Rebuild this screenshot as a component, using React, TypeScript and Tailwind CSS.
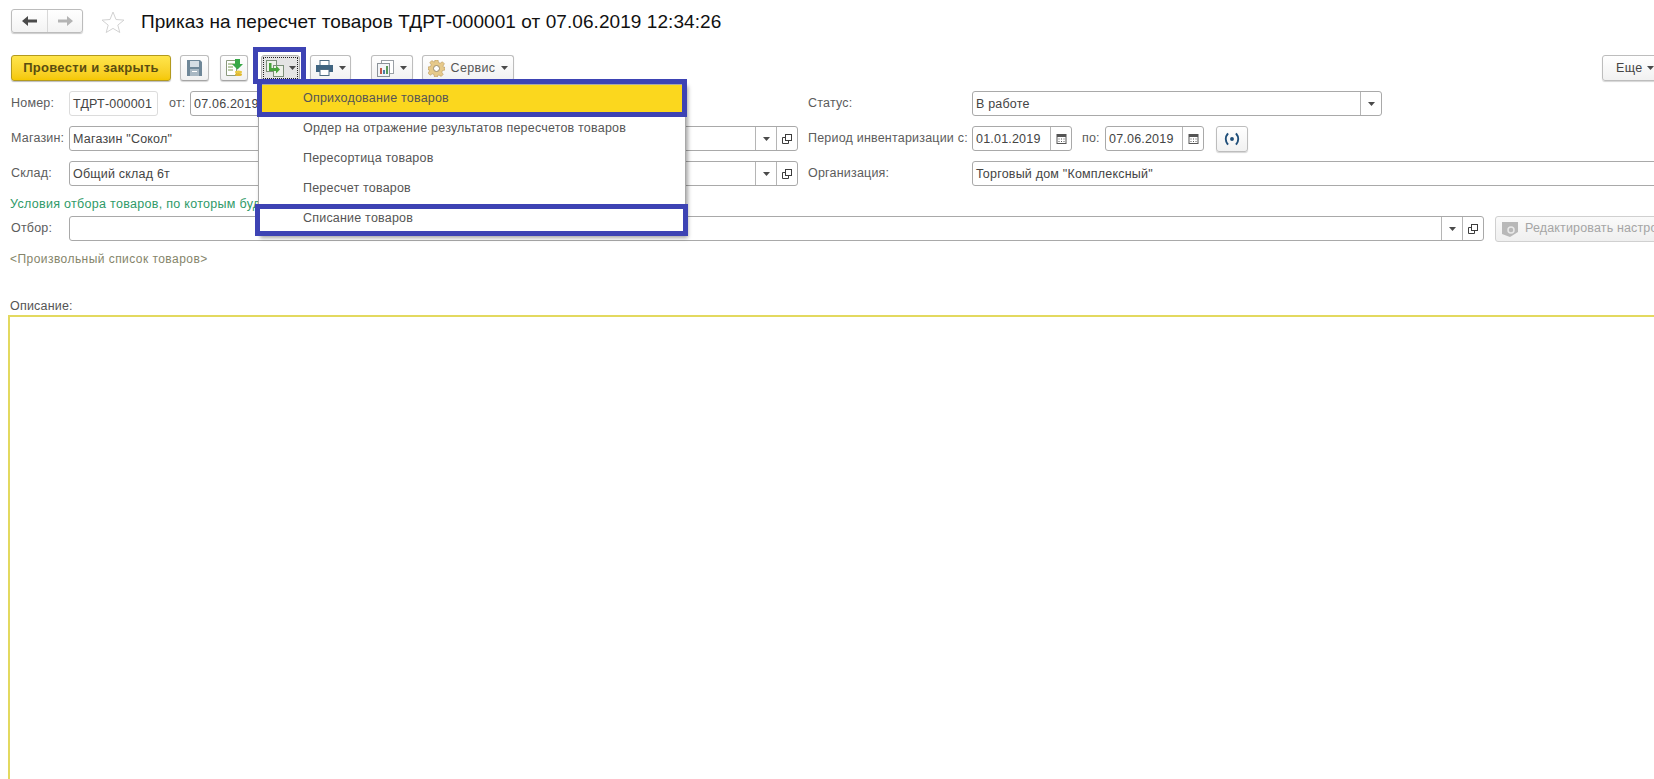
import type { ReactNode } from "react";

// --- мелкие значки ---
function Caret() {
  return (
    <svg width="7" height="4" viewBox="0 0 7 4" className="shrink-0">
      <path d="M0 0h7L3.5 4z" fill="#4a4a4a" />
    </svg>
  );
}

function OpenIcon() {
  return (
    <svg width="12" height="12" viewBox="0 0 12 12" fill="none" stroke="#3d3d3d" strokeWidth="1">
      <rect x="4.5" y="1.5" width="6" height="6" />
      <path d="M4.5 4.5h-3v6h6v-3" />
    </svg>
  );
}

function CalendarIcon() {
  return (
    <svg width="11" height="11" viewBox="0 0 11 11">
      <rect x="1" y="1.5" width="9" height="9" fill="#fff" stroke="#555" />
      <rect x="1" y="1.5" width="9" height="2.5" fill="#555" />
      <path d="M2.5 5.5h1v1h-1zM5 5.5h1v1H5zM7.5 5.5h1v1h-1zM2.5 8h1v1h-1zM5 8h1v1H5zM7.5 8h1v1h-1z" fill="#555" />
    </svg>
  );
}

function Label({ children, className = "" }: { children: ReactNode; className?: string }) {
  return <span className={`shrink-0 text-[12.5px] tracking-[0.2px] text-[#5c5c5c] whitespace-nowrap ${className}`}>{children}</span>;
}

function Field({
  children,
  width,
  buttons = [],
  className = "",
}: {
  children?: ReactNode;
  width: string;
  buttons?: ("drop" | "open" | "cal")[];
  className?: string;
}) {
  return (
    <div className={`flex h-[25px] shrink-0 rounded-[3px] border border-[#a9a9a9] bg-white ${width} ${className}`}>
      <div className="flex-1 overflow-hidden whitespace-nowrap pl-[3px] text-[12.5px] leading-[24px] tracking-[0.2px] text-[#444]">
        {children}
      </div>
      {buttons.map((b, i) => (
        <div key={i} className="flex w-[21px] items-center justify-center border-l border-[#b5b5b5]">
          {b === "drop" && <Caret />}
          {b === "open" && <OpenIcon />}
          {b === "cal" && <CalendarIcon />}
        </div>
      ))}
    </div>
  );
}

function ToolButton({ children, width }: { children: ReactNode; width: string }) {
  return (
    <div className={`flex h-[26px] shrink-0 items-center justify-center gap-[6px] rounded-[3px] border border-[#bdbdbd] border-b-[#a5a5a5] bg-gradient-to-b from-white to-[#f1f1f1] shadow-[0_1px_1px_#d5d5d5] ${width}`}>
      {children}
    </div>
  );
}

const menuItems = [
  "Оприходование товаров",
  "Ордер на отражение результатов пересчетов товаров",
  "Пересортица товаров",
  "Пересчет товаров",
  "Списание товаров",
];

export default function App() {
  return (
    <div className="relative h-[779px] w-[1654px] overflow-hidden bg-white font-['Liberation_Sans',Arial,sans-serif]">
      {/* шапка */}
      <div className="flex h-[55px] items-start pl-[11px] pt-[9px]">
        <div className="flex h-[24px] w-[72px] rounded-[3px] border border-[#bcbcbc] bg-gradient-to-b from-white to-[#f3f3f3] shadow-[0_1px_1px_#ccc]">
          <div className="flex w-[36px] items-center justify-center border-r border-[#d8d8d8]">
            <svg width="16" height="10" viewBox="0 0 16 10">
              <path d="M6 0v3.5h9v3H6V10L0 5z" fill="#4a4a4a" />
            </svg>
          </div>
          <div className="flex flex-1 items-center justify-center">
            <svg width="16" height="10" viewBox="0 0 16 10">
              <path d="M10 0v3.5H1v3h9V10l6-5z" fill="#b4b4b4" />
            </svg>
          </div>
        </div>
        <svg width="24" height="22" viewBox="0 0 24 22" className="ml-[18px] mt-[2px]">
          <path d="M12 1l3 7.5 8 .6-6.2 5 2 7.4L12 17.4 5.200 21.500l2-7.400L1 9.100l8-.6z" fill="#fff" stroke="#d2d2d2" />
        </svg>
        <h1 className="ml-[16px] whitespace-nowrap text-[19px] font-normal leading-[26px] tracking-[0.07px] text-[#111]">
          Приказ на пересчет товаров ТДРТ-000001 от 07.06.2019 12:34:26
        </h1>
      </div>

      {/* панель команд */}
      <div className="relative flex h-[26px] items-center pl-[11px]">
        <div className="flex h-[26px] w-[160px] shrink-0 items-center justify-center rounded-[3px] border border-[#b39a1e] bg-gradient-to-b from-[#ffe54a] to-[#f5c800] text-[13px] font-bold tracking-[0.3px] text-[#5a4d10] shadow-[0_1px_1px_#bbb]">
          Провести и закрыть
        </div>
        <div className="ml-[9px]">
          <ToolButton width="w-[29px]">
            <svg width="15" height="16" viewBox="0 0 15 16">
              <path d="M0 0h13l2 2v14H0z" fill="#6f8798" />
              <rect x="3" y="1" width="9" height="6" fill="#d5dde3" />
              <rect x="3" y="9" width="9" height="7" fill="#a9b8c3" />
              <rect x="5" y="11" width="5" height="1" fill="#fff" />
            </svg>
          </ToolButton>
        </div>
        <div className="ml-[11px]">
          <ToolButton width="w-[28px]">
            <svg width="18" height="18" viewBox="0 0 18 18">
              <path d="M1.500 1.500h10v15h-10z" fill="#fff" stroke="#8c9a7e" />
              <path d="M3 5h7M3 8h5M3 11h5" stroke="#7a9a50" />
              <path d="M10 0h5v5h3l-5.500 5.500L7 5h3z" fill="#38a847" />
              <ellipse cx="13.500" cy="13" rx="3.500" ry="1.500" fill="#e8c840" />
              <ellipse cx="13.500" cy="15.500" rx="3.500" ry="1.500" fill="#e0b830" />
            </svg>
          </ToolButton>
        </div>
        <div className="ml-[13px]">
          <div className="flex h-[26px] w-[39px] items-center justify-center gap-[5px] rounded-[3px] border border-[#b0b0b0] bg-[#e4e4e4] outline-1 -outline-offset-3 outline-dotted outline-[#222]">
            <svg width="18" height="17" viewBox="0 0 18 17">
              <rect x="0.500" y="0.500" width="10" height="11" fill="#eef2ea" stroke="#7b8f78" />
              <rect x="7.500" y="5.500" width="10" height="11" fill="#eef2ea" stroke="#7b8f78" />
              <path d="M3 3h2.500v5H10V5.500l4 4-4 4V11H3z" fill="#48a43c" />
            </svg>
            <Caret />
          </div>
        </div>
        <div className="ml-[10px]">
          <ToolButton width="w-[41px]">
            <svg width="17" height="16" viewBox="0 0 17 16">
              <rect x="4" y="0.500" width="9" height="5" fill="#fff" stroke="#4d6b82" />
              <path d="M0 5h17v7H0z" fill="#3f6480" />
              <rect x="4" y="9.500" width="9" height="6" fill="#fff" stroke="#4d6b82" />
            </svg>
            <Caret />
          </ToolButton>
        </div>
        <div className="ml-[20px]">
          <ToolButton width="w-[42px]">
            <svg width="17" height="17" viewBox="0 0 17 17">
              <rect x="4.500" y="0.500" width="12" height="13" fill="#fff" stroke="#9aa0a6" />
              <rect x="0.500" y="3.500" width="12" height="13" fill="#f3f5f7" stroke="#8b9298" />
              <path d="M3 8h2v6H3z" fill="#c4584a" />
              <path d="M6 10h2v4H6z" fill="#4d7fa8" />
              <path d="M9 6h2v8H9z" fill="#5a9a58" />
            </svg>
            <Caret />
          </ToolButton>
        </div>
        <div className="ml-[9px]">
          <ToolButton width="w-[92px]">
            <svg width="17" height="17" viewBox="0 0 17 17">
              <path d="M7 0h3l.5 2.500 1.700.7 2.200-1.400 2 2-1.400 2.200.7 1.700L17 7v3l-2.500.5-.7 1.700 1.400 2.200-2 2-2.200-1.400-1.700.7L9.500 17h-3l-.5-2.500-1.700-.7-2.200 1.400-2-2 1.400-2.200-.7-1.700L0 10V7l2.500-.5.7-1.700L1.800 2.600l2-2L6 2 6.500 2z" fill="#e6c98a" stroke="#b9975b" strokeWidth="0.6" />
              <circle cx="8.500" cy="8.500" r="3" fill="#fff" stroke="#9a8a6a" />
            </svg>
            <span className="text-[12.5px] tracking-[0.35px] text-[#555]">Сервис</span>
            <Caret />
          </ToolButton>
        </div>
        <div className="absolute left-[1602px]">
          <div className="flex h-[26px] w-[70px] items-center gap-[5px] rounded-[3px] border border-[#bdbdbd] bg-gradient-to-b from-white to-[#f1f1f1] pl-[13px] shadow-[0_1px_1px_#d5d5d5]">
            <span className="text-[12.5px] tracking-[0.35px] text-[#444]">Еще</span>
            <Caret />
          </div>
        </div>
      </div>

      {/* реквизиты */}
      <div className="mt-[10px] flex flex-col gap-[10px]">
        <div className="flex h-[25px] items-center">
          <div className="flex w-[808px] shrink-0 items-center pl-[11px]">
            <Label className="w-[58px]">Номер:</Label>
            <Field width="w-[89px]" className="border-[#dcdcdc]">ТДРТ-000001</Field>
            <Label className="ml-[11px] w-[21px]">от:</Label>
            <Field width="w-[120px]">07.06.2019</Field>
          </div>
          <Label className="w-[164px]">Статус:</Label>
          <Field width="w-[410px]" buttons={["drop"]}>В работе</Field>
        </div>
        <div className="flex h-[25px] items-center">
          <div className="flex w-[808px] shrink-0 items-center pl-[11px]">
            <Label className="w-[58px]">Магазин:</Label>
            <Field width="w-[729px]" buttons={["drop", "open"]}>Магазин "Сокол"</Field>
          </div>
          <Label className="w-[164px]">Период инвентаризации с:</Label>
          <Field width="w-[100px]" buttons={["cal"]}>01.01.2019</Field>
          <Label className="ml-[10px] w-[23px]">по:</Label>
          <Field width="w-[99px]" buttons={["cal"]}>07.06.2019</Field>
          <div className="ml-[12px] flex h-[26px] w-[32px] items-center justify-center rounded-[3px] border border-[#bdbdbd] bg-gradient-to-b from-white to-[#f1f1f1] shadow-[0_1px_1px_#d5d5d5]">
            <svg width="16" height="14" viewBox="0 0 14 12" fill="none" stroke="#1f4e79" strokeWidth="1.800">
              <path d="M3.500 1C1 4 1 8 3.500 11M10.500 1C13 4 13 8 10.500 11" />
              <circle cx="7" cy="6" r="1.700" fill="#1f4e79" stroke="none" />
            </svg>
          </div>
        </div>
        <div className="flex h-[25px] items-center">
          <div className="flex w-[808px] shrink-0 items-center pl-[11px]">
            <Label className="w-[58px]">Склад:</Label>
            <Field width="w-[729px]" buttons={["drop", "open"]}>Общий склад 6т</Field>
          </div>
          <Label className="w-[164px]">Организация:</Label>
          <Field width="w-[700px]">Торговый дом "Комплексный"</Field>
        </div>
      </div>

      <div className="mt-[10px] h-[20px] whitespace-nowrap pl-[10px] text-[12.5px] leading-[17px] tracking-[0.3px] text-[#2f9a68]">
        Условия отбора товаров, по которым будут проводиться пересчеты
      </div>

      <div className="flex h-[25px] items-center pl-[11px]">
        <Label className="w-[58px]">Отбор:</Label>
        <Field width="w-[1415px]" buttons={["drop", "open"]} />
        <div className="ml-[11px] flex h-[26px] w-[200px] shrink-0 items-center gap-[7px] overflow-hidden rounded-[3px] border border-[#d0d0d0] bg-gradient-to-b from-[#fafafa] to-[#efefef] pl-[6px]">
          <svg width="16" height="16" viewBox="0 0 16 16" className="shrink-0">
            <path d="M0 1h16v10l-8 5-8-3z" fill="#b8b8b8" />
            <circle cx="9" cy="9" r="3" fill="none" stroke="#e8e8e8" strokeWidth="1.500" />
          </svg>
          <span className="whitespace-nowrap text-[12.5px] tracking-[0.15px] text-[#a5a5a5]">Редактировать настро</span>
        </div>
      </div>

      <div className="mt-[9px] pl-[10px] text-[12px] leading-[18px] tracking-[0.45px] text-[#85856a]">
        &lt;Произвольный список товаров&gt;
      </div>

      <div className="mt-[30px] h-[17px] pl-[10px] text-[12.5px] leading-[16px] tracking-[0.2px] text-[#555]">Описание:</div>
      <div className="ml-[8px] h-[500px] w-[1700px] border-2 border-[#e3d95f] bg-white" />

      {/* выпадающее меню */}
      <div className="absolute left-[258px] top-[84px] w-[428px] border border-[#a8a8a8] bg-white shadow-[2px_2px_4px_rgba(0,0,0,0.35)]">
        {menuItems.map((item, i) => (
          <div
            key={item}
            className={`h-[30px] whitespace-nowrap pl-[44px] text-[12.5px] leading-[26px] tracking-[0.2px] text-[#555] ${i === 0 ? "bg-[#fbd71e]" : ""}`}
          >
            {item}
          </div>
        ))}
      </div>

      {/* рамки-выделения */}
      <div className="pointer-events-none absolute left-[253px] top-[47px] h-[37px] w-[53px] border-[5px] border-b-0 border-[#3d43b4]" />
      <div className="pointer-events-none absolute left-[257px] top-[79px] h-[38px] w-[430px] border-[5px] border-[#3d43b4]" />
      <div className="pointer-events-none absolute left-[255px] top-[204px] h-[32px] w-[433px] border-[5px] border-[#3d43b4]" />
    </div>
  );
}
